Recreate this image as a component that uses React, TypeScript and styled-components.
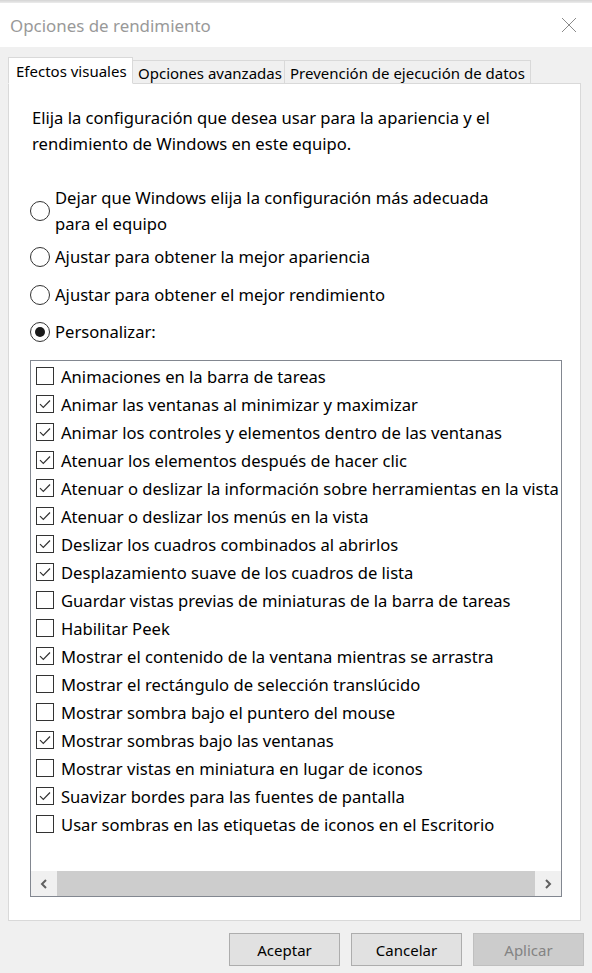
import styled, { createGlobalStyle } from 'styled-components';

const GlobalStyle = createGlobalStyle`
  html, body {
    margin: 0;
    padding: 0;
    background: #f0f0f0;
  }
  body {
    font-family: 'Noto Sans', 'Open Sans', sans-serif;
    font-size: 15px;
    color: #000;
  }
`;

const Window = styled.div`
  width: 592px;
  height: 973px;
  display: flex;
  flex-direction: column;
  overflow: hidden;
`;

const BehindStrip = styled.div`
  height: 3px;
  background: linear-gradient(to bottom, #d4d4d4, #ececec);
`;

const TitleBar = styled.div`
  height: 44px;
  background: #fff;
  display: flex;
  align-items: center;
  justify-content: space-between;
  padding: 0 15px 0 10px;
`;

const Title = styled.span`
  color: #999;
  font-size: 16.9px;
`;

const CloseIcon = styled.svg`
  width: 16px;
  height: 16px;
`;

const Body = styled.div`
  flex: 1;
  display: flex;
  flex-direction: column;
  padding: 10px 11px 0 8px;
`;

const TabRow = styled.div`
  display: flex;
  align-items: flex-end;
  height: 27px;
  position: relative;
  z-index: 1;
`;

const Tab = styled.div<{ $active?: boolean; $w: number }>`
  box-sizing: border-box;
  width: ${(p) => p.$w}px;
  height: ${(p) => (p.$active ? 27 : 24)}px;
  padding: ${(p) => (p.$active ? '0 0 0 7px' : '0 0 0 5px')};
  line-height: ${(p) => (p.$active ? 26 : 24)}px;
  background: ${(p) => (p.$active ? '#fff' : '#f0f0f0')};
  border: 1px solid #d9d9d9;
  border-bottom: ${(p) => (p.$active ? '1px solid #fff' : '1px solid #d9d9d9')};
  border-left: ${(p) => (p.$active ? '1px solid #d9d9d9' : 'none')};
  white-space: nowrap;
`;

const Panel = styled.div`
  height: 838px;
  box-sizing: border-box;
  margin-top: -1px;
  background: #fff;
  border: 1px solid #d9d9d9;
  padding: 21px 0 0 0;
  display: flex;
  flex-direction: column;
  font-size: 16.6px;
`;

const Description = styled.p`
  margin: 0 0 28px 23px;
  line-height: 26px;
`;

const RadioGroup = styled.div`
  display: flex;
  flex-direction: column;
  padding-left: 21px;
`;

const RadioRow = styled.label<{ $gap: number }>`
  display: flex;
  align-items: center;
  gap: 5px;
  line-height: 26px;
  margin-bottom: ${(p) => p.$gap}px;
`;

const RadioText = styled.span`
  white-space: pre-line;
`;

const RadioCircle = styled.span<{ $checked?: boolean }>`
  flex: none;
  box-sizing: border-box;
  width: 20px;
  height: 20px;
  border-radius: 50%;
  border: 1px solid #333;
  background: #fff;
  display: flex;
  align-items: center;
  justify-content: center;

  &::after {
    content: '';
    width: 10px;
    height: 10px;
    border-radius: 50%;
    background: ${(p) => (p.$checked ? '#1a1a1a' : 'transparent')};
  }
`;

const ListBox = styled.div`
  margin: 15px 0 0 21px;
  width: 532px;
  height: 537px;
  box-sizing: border-box;
  border: 1px solid #828790;
  display: flex;
  flex-direction: column;
  overflow: hidden;
`;

const Items = styled.div`
  flex: 1;
  padding: 1px 0 0 5px;
  overflow: hidden;
`;

const ItemRow = styled.div`
  display: flex;
  align-items: center;
  gap: 7px;
  height: 28px;
  white-space: nowrap;
`;

const CheckBox = styled.span`
  flex: none;
  box-sizing: border-box;
  width: 18px;
  height: 18px;
  border: 1px solid #333;
  background: #fff;
  display: flex;
  align-items: center;
  justify-content: center;
`;

const HScroll = styled.div`
  height: 25px;
  background: #f0f0f0;
  display: flex;
  align-items: stretch;
`;

const ScrollArrow = styled.div`
  width: 26px;
  display: flex;
  align-items: center;
  justify-content: center;
`;

const ScrollThumb = styled.div`
  flex: 1;
  background: #cdcdcd;
`;

const ButtonRow = styled.div`
  display: flex;
  justify-content: flex-end;
  gap: 11px;
  margin: 12px -3px 0 0;
`;

const Button = styled.button<{ $disabled?: boolean }>`
  width: 111px;
  height: 33px;
  font: inherit;
  font-size: 15px;
  background: ${(p) => (p.$disabled ? '#cccccc' : '#e1e1e1')};
  border: 1px solid ${(p) => (p.$disabled ? '#bfbfbf' : '#adadad')};
  color: ${(p) => (p.$disabled ? '#838383' : '#000')};
  padding: 0;
`;

const radios = [
  { text: 'Dejar que Windows elija la configuración más adecuada\npara el equipo', gap: 7 },
  { text: 'Ajustar para obtener la mejor apariencia', gap: 12 },
  { text: 'Ajustar para obtener el mejor rendimiento', gap: 11 },
  { text: 'Personalizar:', gap: 0, checked: true },
];

const effects: [string, boolean][] = [
  ['Animaciones en la barra de tareas', false],
  ['Animar las ventanas al minimizar y maximizar', true],
  ['Animar los controles y elementos dentro de las ventanas', true],
  ['Atenuar los elementos después de hacer clic', true],
  ['Atenuar o deslizar la información sobre herramientas en la vista', true],
  ['Atenuar o deslizar los menús en la vista', true],
  ['Deslizar los cuadros combinados al abrirlos', true],
  ['Desplazamiento suave de los cuadros de lista', true],
  ['Guardar vistas previas de miniaturas de la barra de tareas', false],
  ['Habilitar Peek', false],
  ['Mostrar el contenido de la ventana mientras se arrastra', true],
  ['Mostrar el rectángulo de selección translúcido', false],
  ['Mostrar sombra bajo el puntero del mouse', false],
  ['Mostrar sombras bajo las ventanas', true],
  ['Mostrar vistas en miniatura en lugar de iconos', false],
  ['Suavizar bordes para las fuentes de pantalla', true],
  ['Usar sombras en las etiquetas de iconos en el Escritorio', false],
];

function Check() {
  return (
    <svg width="12" height="10" viewBox="0 0 12 10">
      <path d="M1 5.2 L4.3 8.5 L11 1.5" fill="none" stroke="#333" strokeWidth="1.2" />
    </svg>
  );
}

function Chevron({ right }: { right?: boolean }) {
  return (
    <svg width="8" height="10" viewBox="0 0 8 10">
      <path
        d={right ? 'M2 1 L6 5 L2 9' : 'M6 1 L2 5 L6 9'}
        fill="none"
        stroke="#606060"
        strokeWidth="2"
      />
    </svg>
  );
}

export default function App() {
  return (
    <Window>
      <GlobalStyle />
      <BehindStrip />
      <TitleBar>
        <Title>Opciones de rendimiento</Title>
        <CloseIcon viewBox="0 0 16 16">
          <path d="M1 1 L15 15 M15 1 L1 15" stroke="#8a8a8a" strokeWidth="1" />
        </CloseIcon>
      </TitleBar>
      <Body>
        <TabRow>
          <Tab $active $w={125}>Efectos visuales</Tab>
          <Tab $w={152}>Opciones avanzadas</Tab>
          <Tab $w={246}>Prevención de ejecución de datos</Tab>
        </TabRow>
        <Panel>
          <Description>
            Elija la configuración que desea usar para la apariencia y el
            <br />
            rendimiento de Windows en este equipo.
          </Description>
          <RadioGroup>
            {radios.map((r) => (
              <RadioRow key={r.text} $gap={r.gap}>
                <RadioCircle $checked={r.checked} />
                <RadioText>{r.text}</RadioText>
              </RadioRow>
            ))}
          </RadioGroup>
          <ListBox>
            <Items>
              {effects.map(([label, on]) => (
                <ItemRow key={label}>
                  <CheckBox>{on && <Check />}</CheckBox>
                  {label}
                </ItemRow>
              ))}
            </Items>
            <HScroll>
              <ScrollArrow>
                <Chevron />
              </ScrollArrow>
              <ScrollThumb />
              <ScrollArrow>
                <Chevron right />
              </ScrollArrow>
            </HScroll>
          </ListBox>
        </Panel>
        <ButtonRow>
          <Button>Aceptar</Button>
          <Button>Cancelar</Button>
          <Button $disabled>Aplicar</Button>
        </ButtonRow>
      </Body>
    </Window>
  );
}
